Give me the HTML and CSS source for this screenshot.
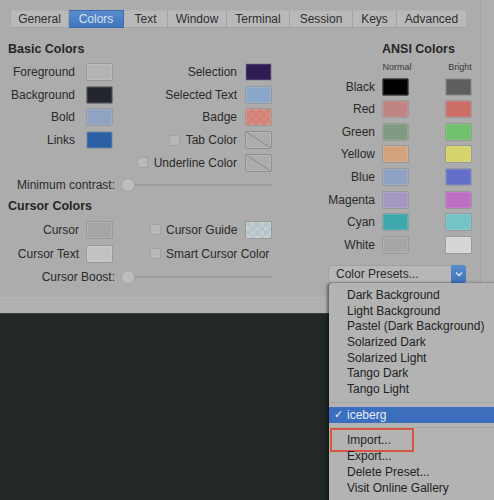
FILE: index.html
```html
<!DOCTYPE html>
<html>
<head>
<meta charset="utf-8">
<link rel="stylesheet" href="styles.css">
</head>
<body>
<div class="window">
  <div class="prefs">
    <div class="tabs">
      <div class="tab w-general">General</div>
      <div class="tab w-colors active">Colors</div>
      <div class="tab w-text">Text</div>
      <div class="tab w-window">Window</div>
      <div class="tab w-terminal">Terminal</div>
      <div class="tab w-session">Session</div>
      <div class="tab w-keys">Keys</div>
      <div class="tab w-advanced last">Advanced</div>
    </div>
    <div class="body">
      <div class="left">
        <div class="section">Basic Colors</div>
        <div class="basic-grid">
          <div class="lbl">Foreground</div><div class="sw sw-fg"></div>
          <div class="lbl">Selection</div><div class="sw sw-sel"></div>
          <div class="lbl">Background</div><div class="sw sw-bg"></div>
          <div class="lbl">Selected Text</div><div class="sw sw-seltext"></div>
          <div class="lbl">Bold</div><div class="sw sw-bold"></div>
          <div class="lbl">Badge</div><div class="sw sw-badge"></div>
          <div class="lbl">Links</div><div class="sw sw-links"></div>
          <div class="lbl"><span class="cb"></span>Tab Color</div><div class="sw sw-none"></div>
          <div class="lbl"></div><div></div>
          <div class="lbl"><span class="cb"></span>Underline Color</div><div class="sw sw-none"></div>
        </div>
        <div class="slider-row contrast">
          <div class="slabel">Minimum contrast:</div>
          <div class="slider"><span class="knob"></span><span class="track"></span></div>
        </div>
        <div class="section cursor-head">Cursor Colors</div>
        <div class="cursor-grid">
          <div class="lbl">Cursor</div><div class="sw sw-cursor"></div>
          <div class="chk"><span class="cb"></span>Cursor Guide</div><div class="sw sw-guide"></div>
          <div class="lbl">Cursor Text</div><div class="sw sw-ctext"></div>
          <div class="chk wide"><span class="cb"></span>Smart Cursor Color</div>
        </div>
        <div class="slider-row boost">
          <div class="slabel">Cursor Boost:</div>
          <div class="slider"><span class="knob"></span><span class="track"></span></div>
        </div>
      </div>
      <div class="right">
        <div class="section ansi-head">ANSI Colors</div>
        <div class="ansi-grid">
          <div></div><div class="sub">Normal</div><div class="sub">Bright</div>
          <div class="lbl">Black</div><div class="sw a-black"></div><div class="sw b-black"></div>
          <div class="lbl">Red</div><div class="sw a-red"></div><div class="sw b-red"></div>
          <div class="lbl">Green</div><div class="sw a-green"></div><div class="sw b-green"></div>
          <div class="lbl">Yellow</div><div class="sw a-yellow"></div><div class="sw b-yellow"></div>
          <div class="lbl">Blue</div><div class="sw a-blue"></div><div class="sw b-blue"></div>
          <div class="lbl">Magenta</div><div class="sw a-magenta"></div><div class="sw b-magenta"></div>
          <div class="lbl">Cyan</div><div class="sw a-cyan"></div><div class="sw b-cyan"></div>
          <div class="lbl">White</div><div class="sw a-white"></div><div class="sw b-white"></div>
        </div>
        <div class="popup">
          <span class="popup-text">Color Presets...</span>
          <span class="popup-btn"><svg width="8" height="6" viewBox="0 0 8 6"><path d="M1 1.5 L4 4.5 L7 1.5" fill="none" stroke="#dfe6f2" stroke-width="1.4"/></svg></span>
        </div>
      </div>
    </div>
  </div>
  <div class="band"></div>
  <div class="terminal"></div>

  <div class="menu">
    <div class="item">Dark Background</div>
    <div class="item">Light Background</div>
    <div class="item">Pastel (Dark Background)</div>
    <div class="item">Solarized Dark</div>
    <div class="item">Solarized Light</div>
    <div class="item">Tango Dark</div>
    <div class="item">Tango Light</div>
    <div class="sep"></div>
    <div class="item selected"><span class="check">✓</span>iceberg</div>
    <div class="sep"></div>
    <div class="item pitched"><span class="redbox"></span>Import...</div>
    <div class="item pitched">Export...</div>
    <div class="item pitched">Delete Preset...</div>
    <div class="item pitched">Visit Online Gallery</div>
  </div>
</div>
</body>
</html>
```

FILE: styles.css
```css
* { box-sizing: border-box; }
html, body {
  margin: 0;
  padding: 0;
  width: 494px;
  height: 500px;
  overflow: hidden;
  background: #222828;
}
body {
  font-family: "Liberation Sans", Arial, sans-serif;
  font-size: 12px;
  color: #2a2a2a;
}
.window {
  position: relative;
  width: 494px;
  height: 500px;
}
.prefs {
  height: 297px;
  background: linear-gradient(to right, #acacac 480px, #a3a3a3 480px, #a3a3a3 481px, #afafaf 481px);
}
.tabs {
  display: flex;
  margin-left: 10px;
  padding-top: 10px;
  height: 28px;
}
.tab {
  height: 18px;
  line-height: 17px;
  text-align: center;
  background: #b9b9b9;
  border-right: 1px solid #a4a4a4;
  border-top: 1px solid #b2b2b2;
  border-bottom: 1px solid #a2a2a2;
  color: #2e2e2e;
  font-size: 12px;
}
.tab:first-child { border-radius: 3px 0 0 3px; border-left: 1px solid #a8a8a8; }
.tab.last { border-radius: 0 3px 3px 0; border-right: 1px solid #a8a8a8; }
.tab.active {
  background: linear-gradient(#5a8ccc, #3f76bd);
  color: #d9e2ef;
  border-color: #3c6cae;
}
.w-general { width: 59px; }
.w-colors { width: 55px; }
.w-text { width: 44px; }
.w-window { width: 59px; }
.w-terminal { width: 63px; }
.w-session { width: 63px; }
.w-keys { width: 44px; }
.w-advanced { width: 70px; }

.body {
  display: flex;
  padding-top: 13px;
}
.left {
  width: 300px;
  padding-left: 8px;
}
.section {
  font-weight: bold;
  font-size: 12.5px;
  line-height: 16px;
  height: 16px;
  color: #262626;
}
.basic-grid {
  margin-top: 6px;
  display: grid;
  grid-template-columns: 68px 37px 132px 27px;
  row-gap: 4.7px;
  grid-auto-rows: 18px;
}
.basic-grid > :nth-child(4n+1) { padding-right: 1px; }
.basic-grid > :nth-child(4n+2) { margin-left: 10px; width: 27px; }
.basic-grid > :nth-child(4n+3) { padding-right: 8px; }

.lbl {
  text-align: right;
  line-height: 18px;
  white-space: nowrap;
  display: flex;
  justify-content: flex-end;
  align-items: center;
}
.cb {
  display: inline-block;
  flex-shrink: 0;
  width: 11px;
  height: 11px;
  border-radius: 2px;
  background: #b8b8b8;
  border: 1px solid #a3a3a3;
  margin-right: 6px;
}
.sw {
  width: 27px;
  height: 18px;
  border-radius: 2px;
  border: 1px solid #999;
  box-shadow: inset 0 0 0 1px rgba(255,255,255,0.12);
}
.sw-fg { background: #b3b3b3; }
.sw-bg { background: #23252d; border-color: #777; }
.sw-bold { background: #8fa3c2; }
.sw-links { background: #2d5fa6; }
.sw-sel { background: #2e1b52; }
.sw-seltext { background: #89a8ca; }
.sw-badge {
  background-color: #d78a7c;
  background-image:
    linear-gradient(45deg, #cf8275 25%, transparent 25%, transparent 75%, #cf8275 75%),
    linear-gradient(45deg, #cf8275 25%, transparent 25%, transparent 75%, #cf8275 75%);
  background-size: 8px 8px;
  background-position: 0 0, 4px 4px;
}
.sw-none {
  background: linear-gradient(to top right, transparent calc(50% - 0.6px), #7a7a7a 50%, transparent calc(50% + 0.6px)), #acacac;
  border-color: #8f8f8f;
}
.sw-cursor { background: #a6a6a6; }
.sw-ctext { background: #c2c2c2; }
.sw-guide {
  background-color: #b4c3c6;
  background-image:
    linear-gradient(45deg, #c2cfd2 25%, transparent 25%, transparent 75%, #c2cfd2 75%),
    linear-gradient(45deg, #c2cfd2 25%, transparent 25%, transparent 75%, #c2cfd2 75%);
  background-size: 9px 9px;
  background-position: 0 0, 4.5px 4.5px;
}

.slider-row {
  display: flex;
  align-items: center;
  height: 14px;
}
.contrast { margin-top: 6px; }
.boost { margin-top: 7px; }
.slabel {
  width: 107px;
  text-align: right;
  white-space: nowrap;
}
.slider {
  position: relative;
  margin-left: 6px;
  width: 151px;
  height: 14px;
  display: flex;
  align-items: center;
}
.track {
  display: block;
  width: 100%;
  height: 2px;
  background: #9c9c9c;
  border-radius: 1px;
}
.knob {
  position: absolute;
  left: 0;
  top: 0;
  width: 14px;
  height: 14px;
  border-radius: 50%;
  background: #bdbdbd;
  border: 1px solid #a4a4a4;
}
.cursor-head { margin-top: 6px; }
.cursor-grid {
  margin-top: 7px;
  display: grid;
  grid-template-columns: 71px 34px 132px 27px;
  grid-auto-rows: 18px;
  row-gap: 6px;
}
.cursor-grid > .sw:nth-child(2), .cursor-grid > .sw:nth-child(6) { margin-left: 7px; }
.chk {
  display: flex;
  align-items: center;
  padding-left: 37px;
  white-space: nowrap;
}
.chk .cb { margin-right: 5px; }
.chk.wide { grid-column: 3 / 5; }

.right {
  width: 170px;
}
.ansi-head { padding-left: 82px; }
.ansi-grid {
  margin-top: 5px;
  display: grid;
  grid-template-columns: 75px 34px 63px;
  grid-template-rows: 11px;
  grid-auto-rows: 18px;
  row-gap: 4.6px;
}
.ansi-grid > :nth-child(3n+2) { margin-left: 7px; }
.ansi-grid > :nth-child(3n) { margin-left: 36px; }
.sub {
  font-size: 9px;
  line-height: 12px;
  color: #3a3a3a;
  width: 30px;
  text-align: center;
  margin-top: -1px;
}
.a-black { background: #000; border-color: #555; }
.b-black { background: #5e5e5e; }
.a-red { background: #c08482; }
.b-red { background: #cb6c65; }
.a-green { background: #7f9a82; }
.b-green { background: #70c26d; }
.a-yellow { background: #d1a37e; }
.b-yellow { background: #d6d36c; }
.a-blue { background: #8ea3c3; }
.b-blue { background: #6370cb; }
.a-magenta { background: #a498c3; }
.b-magenta { background: #be6ec5; }
.a-cyan { background: #3ea8ad; }
.b-cyan { background: #74c4c6; }
.a-white { background: #a6a6a6; }
.b-white { background: #d6d6d6; }

.popup {
  margin-top: 11px;
  margin-left: 28px;
  width: 138px;
  height: 18px;
  display: flex;
  align-items: center;
  background: #b7b7b7;
  border: 1px solid #a2a2a2;
  border-radius: 3px;
}
.popup-text {
  flex: 1;
  padding-left: 7px;
  line-height: 16px;
  color: #2a2a2a;
}
.popup-btn {
  width: 15px;
  height: 18px;
  margin: -1px -1px -1px 0;
  background: linear-gradient(#5a8ccc, #3d73ba);
  border-radius: 0 3px 3px 0;
  display: flex;
  align-items: center;
  justify-content: center;
}

.band {
  height: 17px;
  background: #b0b0b0;
  border-top: 1px solid #b6b6b6;
  border-bottom: 1px solid #3a3f3f;
}
.terminal {
  height: 186px;
  background: #222828;
}

.menu {
  position: absolute;
  left: 329px;
  top: 283px;
  width: 175px;
  height: 230px;
  background: #b3b3b3;
  padding-top: 5px;
  box-shadow: -2px 0 3px rgba(0,0,0,0.45);
  border-radius: 4px 0 0 4px;
}
.item {
  position: relative;
  height: 15.67px;
  line-height: 15.67px;
  padding-left: 18px;
  color: #222;
  font-size: 12px;
  white-space: nowrap;
}
.item.pitched { height: 16px; line-height: 16px; }
.sep {
  height: 9px;
  position: relative;
}
.sep::after {
  content: "";
  position: absolute;
  left: 0;
  right: 0;
  top: 4px;
  height: 1px;
  background: #a8a8a8;
}
.item.selected {
  background: #3b6fbd;
  color: #e6ecf5;
  height: 16px;
  line-height: 16px;
}
.check {
  position: absolute;
  left: 5px;
  top: 0;
  font-family: "DejaVu Sans", sans-serif;
  font-size: 11px;
}
.redbox {
  position: absolute;
  left: 1px;
  top: -4px;
  width: 84px;
  height: 24px;
  border: 2px solid #d8553f;
}
```
